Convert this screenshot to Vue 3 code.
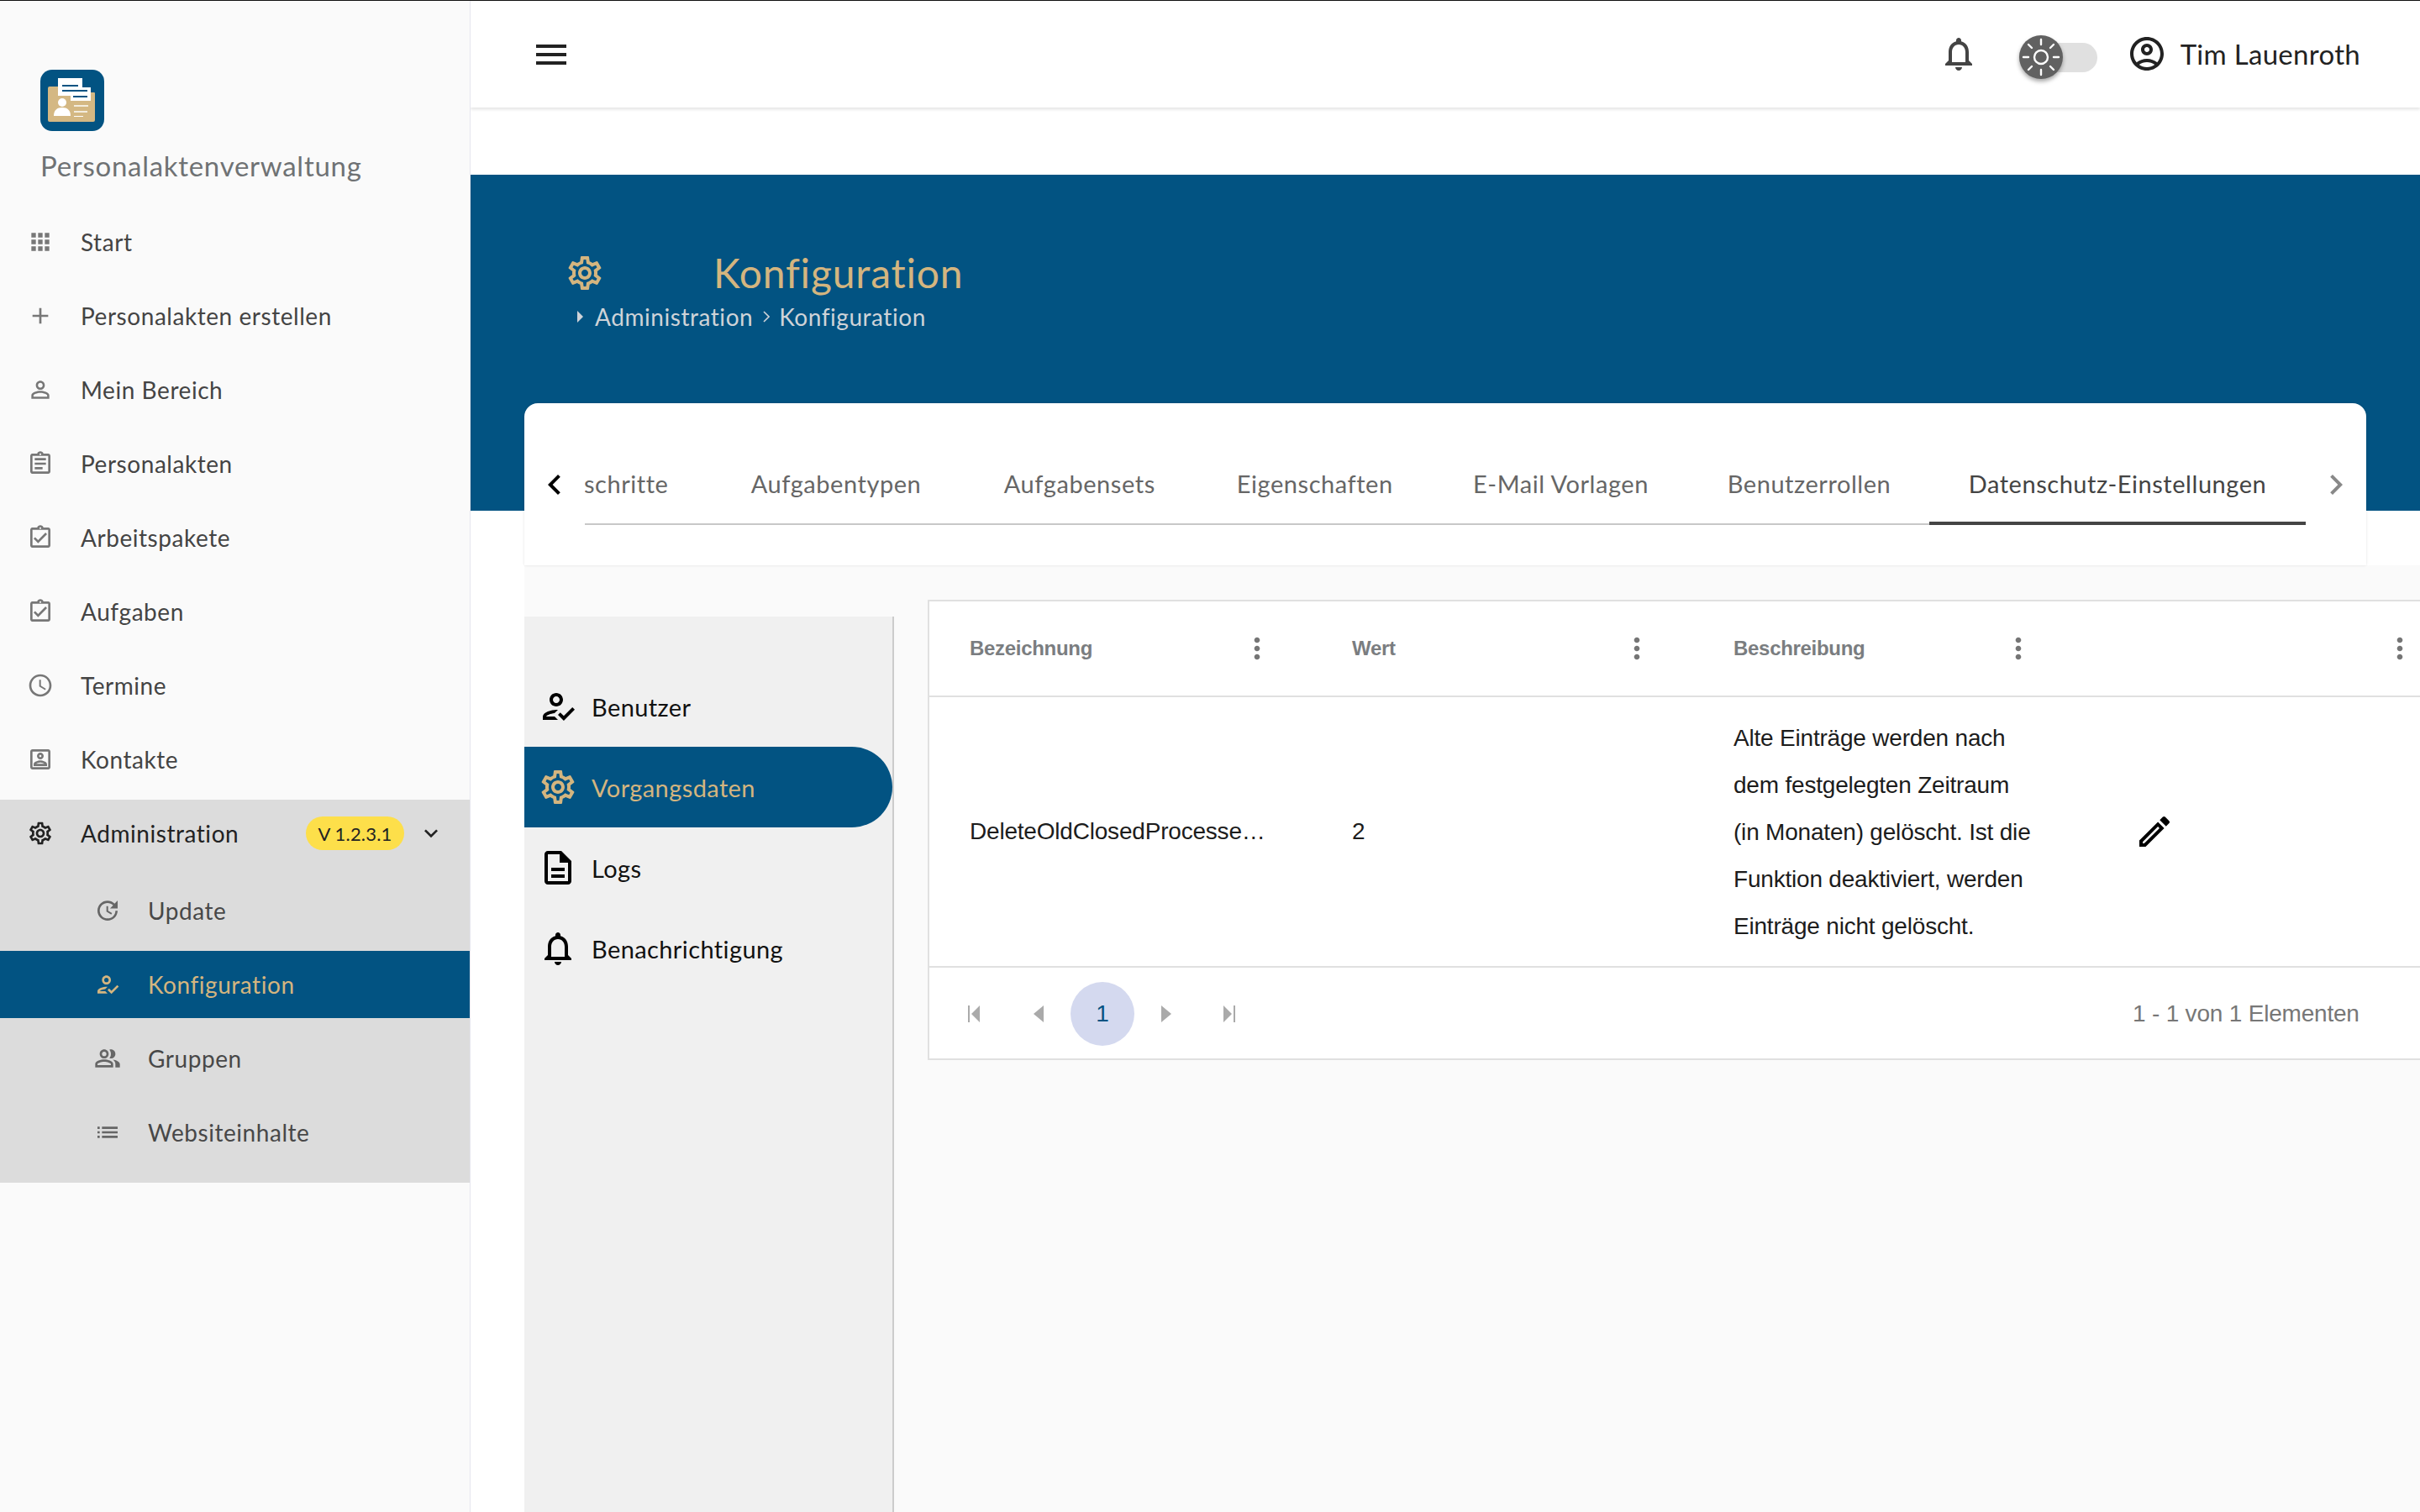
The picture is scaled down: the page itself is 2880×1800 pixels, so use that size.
<script setup>
const P = {
  apps: 'M4 8h4V4H4v4zm6 12h4v-4h-4v4zm-6 0h4v-4H4v4zm0-6h4v-4H4v4zm6 0h4v-4h-4v4zm6-10v4h4V4h-4zm-6 4h4V4h-4v4zm6 6h4v-4h-4v4zm0 6h4v-4h-4v4z',
  add: 'M19 13h-6v6h-2v-6H5v-2h6V5h2v6h6v2z',
  person: 'M12 5.9c1.16 0 2.1.94 2.1 2.1s-.94 2.1-2.1 2.1S9.9 9.16 9.9 8s.94-2.1 2.1-2.1m0 9c2.97 0 6.1 1.46 6.1 2.1v1.1H5.9V17c0-.64 3.13-2.1 6.1-2.1M12 4C9.79 4 8 5.79 8 8s1.79 4 4 4 4-1.79 4-4-1.79-4-4-4zm0 9c-2.67 0-8 1.34-8 4v3h16v-3c0-2.66-5.33-4-8-4z',
  assignment: 'M7 15h7v2H7zm0-4h10v2H7zm0-4h10v2H7zm12-4h-4.18C14.4 1.84 13.3 1 12 1c-1.3 0-2.4.84-2.82 2H5c-.14 0-.27.01-.4.04-.39.08-.74.28-1.01.55-.18.18-.33.4-.43.64-.1.23-.16.49-.16.77v14c0 .27.06.54.16.78s.25.45.43.64c.27.27.62.47 1.01.55.13.02.26.03.4.03h14c1.1 0 2-.9 2-2V5c0-1.1-.9-2-2-2zm-7-.25c.41 0 .75.34.75.75s-.34.75-.75.75-.75-.34-.75-.75.34-.75.75-.75zM19 19H5V5h14v14z',
  turnedIn: 'M18 9l-1.41-1.42L10 14.17l-2.59-2.58L6 13l4 4zm1-6h-4.18C14.4 1.84 13.3 1 12 1c-1.3 0-2.4.84-2.82 2H5c-.14 0-.27.01-.4.04-.39.08-.74.28-1.01.55-.18.18-.33.4-.43.64-.1.23-.16.49-.16.77v14c0 .27.06.54.16.78s.25.45.43.64c.27.27.62.47 1.01.55.13.02.26.03.4.03h14c1.1 0 2-.9 2-2V5c0-1.1-.9-2-2-2zm-7-.25c.41 0 .75.34.75.75s-.34.75-.75.75-.75-.34-.75-.75.34-.75.75-.75zM19 19H5V5h14v14z',
  schedule: 'M11.99 2C6.47 2 2 6.48 2 12s4.47 10 9.99 10C17.52 22 22 17.52 22 12S17.52 2 11.99 2zM12 20c-4.42 0-8-3.58-8-8s3.58-8 8-8 8 3.58 8 8-3.58 8-8 8zm.5-13H11v6l5.25 3.15.75-1.23-4.5-2.67z',
  contact: 'M19 5v14H5V5h14m0-2H5c-1.11 0-2 .9-2 2v14c0 1.1.89 2 2 2h14c1.1 0 2-.9 2-2V5c0-1.1-.9-2-2-2zm-7 9c-1.65 0-3-1.35-3-3s1.35-3 3-3 3 1.35 3 3-1.35 3-3 3zm0-4c-.55 0-1 .45-1 1s.45 1 1 1 1-.45 1-1-.45-1-1-1zm6 10H6v-1.53c0-2.5 3.97-3.58 6-3.58s6 1.08 6 3.58V18zm-9.69-2h7.38c-.69-.56-2.38-1.12-3.69-1.12s-3.01.56-3.69 1.12z',
  settings: 'M19.43 12.98c.04-.32.07-.64.07-.98 0-.34-.03-.66-.07-.98l2.11-1.65c.19-.15.24-.42.12-.64l-2-3.46c-.09-.16-.26-.25-.44-.25-.06 0-.12.01-.17.03l-2.49 1c-.52-.4-1.08-.73-1.69-.98l-.38-2.65C14.46 2.18 14.25 2 14 2h-4c-.25 0-.46.18-.49.42l-.38 2.65c-.61.25-1.17.59-1.69.98l-2.49-1c-.06-.02-.12-.03-.18-.03-.17 0-.34.09-.43.25l-2 3.46c-.13.22-.07.49.12.64l2.11 1.65c-.04.32-.07.65-.07.98 0 .33.03.66.07.98l-2.11 1.65c-.19.15-.24.42-.12.64l2 3.46c.09.16.26.25.44.25.06 0 .12-.01.17-.03l2.49-1c.52.4 1.08.73 1.69.98l.38 2.65c.03.24.24.42.49.42h4c.25 0 .46-.18.49-.42l.38-2.65c.61-.25 1.17-.59 1.69-.98l2.49 1c.06.02.12.03.18.03.17 0 .34-.09.43-.25l2-3.46c.12-.22.07-.49-.12-.64l-2.11-1.65zm-1.98-1.71c.04.31.05.52.05.73 0 .21-.02.43-.05.73l-.14 1.13.89.7 1.08.84-.7 1.21-1.27-.51-1.04-.42-.9.68c-.43.32-.84.56-1.25.73l-1.06.43-.16 1.13-.2 1.35h-1.4l-.19-1.35-.16-1.13-1.06-.43c-.43-.18-.83-.41-1.23-.71l-.91-.7-1.06.43-1.27.51-.7-1.21 1.08-.84.89-.7-.14-1.13c-.03-.31-.05-.54-.05-.74s.02-.43.05-.73l.14-1.13-.89-.7-1.08-.84.7-1.21 1.27.51 1.04.42.9-.68c.43-.32.84-.56 1.25-.73l1.06-.43.16-1.13.2-1.35h1.39l.19 1.35.16 1.13 1.06.43c.43.18.83.41 1.23.71l.91.7 1.06-.43 1.27-.51.7 1.21-1.07.85-.89.7.14 1.13zM12 8c-2.21 0-4 1.79-4 4s1.79 4 4 4 4-1.79 4-4-1.79-4-4-4zm0 6c-1.1 0-2-.9-2-2s.9-2 2-2 2 .9 2 2-.9 2-2 2z',
  expand: 'M16.59 8.59L12 13.17 7.41 8.59 6 10l6 6 6-6z',
  update: 'M21 10.12h-6.78l2.74-2.82c-2.73-2.7-7.15-2.8-9.88-.1-2.73 2.71-2.73 7.08 0 9.79s7.15 2.71 9.88 0C18.32 15.65 19 14.08 19 12.1h2c0 1.98-.88 4.55-2.64 6.29-3.51 3.48-9.21 3.48-12.72 0-3.5-3.47-3.53-9.11-.02-12.58s9.14-3.47 12.65 0L21 3v7.12zM12.5 8v4.25l3.5 2.08-.72 1.21L11 13V8h1.5z',
  reg: 'M11 4C8.79 4 7 5.79 7 8s1.79 4 4 4 4-1.79 4-4-1.79-4-4-4zm0 6c-1.1 0-2-.9-2-2s.9-2 2-2 2 .9 2 2-.9 2-2 2zM5 18c.2-.63 2.57-1.68 4.96-1.94l2.04-2c-.39-.04-.68-.06-1-.06-2.67 0-8 1.34-8 4v2h9l-2-2H5zm15.6-5.5l-5.13 5.17-2.07-2.08L12 17l3.47 3.5L22 13.91z',
  people: 'M16.67 13.13C18.04 14.06 19 15.32 19 17v3h4v-3c0-2.18-3.57-3.47-6.33-3.87zM15 12c2.21 0 4-1.79 4-4s-1.79-4-4-4c-.47 0-.91.1-1.33.24C14.5 5.27 15 6.58 15 8s-.5 2.73-1.33 3.76c.42.14.86.24 1.33.24zM9 12c2.21 0 4-1.79 4-4s-1.79-4-4-4-4 1.79-4 4 1.79 4 4 4zm0-6c1.1 0 2 .9 2 2s-.9 2-2 2-2-.9-2-2 .9-2 2-2zM9 13c-2.67 0-8 1.34-8 4v3h16v-3c0-2.66-5.33-4-8-4zm6 5H3v-.99C3.2 16.29 6.3 15 9 15s5.8 1.29 6 2v1z',
  list: 'M3 13h2v-2H3v2zm0 4h2v-2H3v2zm0-8h2V7H3v2zm4 4h14v-2H7v2zm0 4h14v-2H7v2zM7 7v2h14V7H7z',
  bell: 'M12 22c1.1 0 2-.9 2-2h-4c0 1.1.9 2 2 2zm6-6v-5c0-3.07-1.63-5.64-4.5-6.32V4c0-.83-.67-1.5-1.5-1.5s-1.5.67-1.5 1.5v.68C7.64 5.36 6 7.92 6 11v5l-2 2v1h16v-1l-2-2zm-2 1H8v-6c0-2.48 1.51-4.5 4-4.5s4 2.02 4 4.5v6z',
  doc: 'M8 16h8v2H8zm0-4h8v2H8zm6-10H6c-1.1 0-2 .9-2 2v16c0 1.1.89 2 1.99 2H18c1.1 0 2-.9 2-2V8l-6-6zm4 18H6V4h7v5h5v11z',
  account: 'M12 2C6.48 2 2 6.48 2 12s4.48 10 10 10 10-4.48 10-10S17.52 2 12 2zM7.35 18.5C8.66 17.56 10.26 17 12 17s3.34.56 4.65 1.5c-1.31.94-2.91 1.5-4.65 1.5s-3.34-.56-4.65-1.5zm10.79-1.38C16.45 15.8 14.32 15 12 15s-4.45.8-6.14 2.12C4.7 15.73 4 13.95 4 12c0-4.42 3.58-8 8-8s8 3.58 8 8c0 1.95-.7 3.73-1.86 5.12zM12 6c-1.93 0-3.5 1.57-3.5 3.5S10.07 13 12 13s3.5-1.57 3.5-3.5S13.93 6 12 6zm0 5c-.83 0-1.5-.67-1.5-1.5S11.17 8 12 8s1.5.67 1.5 1.5S12.83 11 12 11z',
  edit: 'M14.06 9.02l.92.92L5.92 19H5v-.92l9.06-9.06M17.66 3c-.25 0-.51.1-.7.29l-1.83 1.83 3.75 3.75 1.83-1.83c.39-.39.39-1.02 0-1.41l-2.34-2.34c-.2-.2-.45-.29-.71-.29zm-3.6 3.19L3 17.25V21h3.75L17.81 9.94l-3.75-3.75z',
  kebab: 'M12 8c1.1 0 2-.9 2-2s-.9-2-2-2-2 .9-2 2 .9 2 2 2zm0 2c-1.1 0-2 .9-2 2s.9 2 2 2 2-.9 2-2-.9-2-2-2zm0 6c-1.1 0-2 .9-2 2s.9 2 2 2 2-.9 2-2-.9-2-2-2z',
  menu: 'M3 18h18v-2H3v2zm0-5h18v-2H3v2zm0-7v2h18V6H3z',
  left: 'M15.41 7.41L14 6l-6 6 6 6 1.41-1.41L10.83 12z',
  right: 'M10 6L8.59 7.41 13.17 12l-4.58 4.59L10 18l6-6z'
}
const mainItems = [
  ['apps', 'Start'], ['add', 'Personalakten erstellen'], ['person', 'Mein Bereich'],
  ['assignment', 'Personalakten'], ['turnedIn', 'Arbeitspakete'], ['turnedIn', 'Aufgaben'],
  ['schedule', 'Termine'], ['contact', 'Kontakte']
]
const subItems = [
  ['update', 'Update', false], ['reg', 'Konfiguration', true], ['people', 'Gruppen', false], ['list', 'Websiteinhalte', false]
]
const tabs = [
  ['Prozessschritte', 300], ['Aufgabentypen', 300], ['Aufgabensets', 279.5], ['Eigenschaften', 280.5],
  ['E-Mail Vorlagen', 305], ['Benutzerrollen', 286], ['Datenschutz-Einstellungen', 448]
]
const navItems = [
  ['reg', 'Benutzer', false], ['settings', 'Vorgangsdaten', true], ['doc', 'Logs', false], ['bell', 'Benachrichtigung', false]
]
const columns = ['Bezeichnung', 'Wert', 'Beschreibung', '']
const description = ['Alte Einträge werden nach', 'dem festgelegten Zeitraum', '(in Monaten) gelöscht. Ist die', 'Funktion deaktiviert, werden', 'Einträge nicht gelöscht.']
</script>

<template>
  <div class="page">
    <aside class="sidebar">
      <div class="brand">
        <svg class="logo" viewBox="0 0 76 73">
          <rect width="76" height="73" rx="14" fill="#025382" />
          <path d="M9 22a2 2 0 0 1 2-2h21l3 7h29a1 1 0 0 1 1 1v32a2 2 0 0 1-2 2H11a2 2 0 0 1-2-2z" fill="#d4b883" />
          <rect x="21" y="10" width="29" height="21" fill="#fff" />
          <rect x="36" y="21" width="24" height="16" fill="#fff" />
          <rect x="26" y="18" width="19" height="2" fill="#025382" />
          <rect x="26" y="24" width="30" height="2" fill="#025382" />
          <rect x="39" y="31" width="17" height="2" fill="#025382" />
          <circle cx="26" cy="39" r="5" fill="#fff" />
          <path d="M16 55c0-7 4-10 10-10s10 3 10 10z" fill="#fff" />
          <rect x="40" y="42" width="17" height="2" fill="#f3ecdd" />
          <rect x="40" y="49" width="16" height="2" fill="#f3ecdd" />
          <rect x="40" y="55" width="11" height="1" fill="#fff" />
        </svg>
        <div class="brand-name">Personalaktenverwaltung</div>
      </div>
      <nav class="side-list">
        <div v-for="item in mainItems" :key="item[1]" class="side-item">
          <svg class="side-icon" viewBox="0 0 24 24"><path :d="P[item[0]]" /></svg>
          <span>{{ item[1] }}</span>
        </div>
      </nav>
      <div class="admin">
        <div class="side-item admin-head">
          <svg class="side-icon dark" viewBox="0 0 24 24"><path :d="P.settings" /></svg>
          <span class="admin-label">Administration</span>
          <span class="badge">V 1.2.3.1</span>
          <svg class="side-icon dark expand" viewBox="0 0 24 24"><path :d="P.expand" /></svg>
        </div>
        <div v-for="item in subItems" :key="item[1]" class="sub-item" :class="{ active: item[2] }">
          <svg class="sub-icon" viewBox="0 0 24 24"><path :d="P[item[0]]" /></svg>
          <span>{{ item[1] }}</span>
        </div>
      </div>
    </aside>

    <main class="main">
      <header class="topbar">
        <svg class="icon48 menu" viewBox="0 0 24 24"><path :d="P.menu" /></svg>
        <div class="top-right">
          <svg class="icon48 bell" viewBox="0 0 24 24"><path :d="P.bell" /></svg>
          <div class="toggle">
            <div class="thumb">
              <svg viewBox="0 0 52 52" width="52" height="52" fill="none" stroke="#fff" stroke-width="2.4" stroke-linecap="round">
                <circle cx="26" cy="26" r="8" />
                <path d="M26 5v6M26 41v6M5 26h6M41 26h6M11 11l4 4M37 37l4 4M41 11l-4 4M15 37l-4 4" />
              </svg>
            </div>
          </div>
          <svg class="icon48 account" viewBox="0 0 24 24"><path :d="P.account" /></svg>
          <span class="user">Tim Lauenroth</span>
        </div>
      </header>

      <section class="hero">
        <div class="hero-title">
          <svg class="icon48 gold" viewBox="0 0 24 24"><path :d="P.settings" /></svg>
          <h1>Konfiguration</h1>
        </div>
        <div class="crumbs">
          <svg class="crumb-tri" viewBox="0 0 7 14"><path d="M0 0l7 7-7 7z" /></svg>
          <span>Administration</span>
          <svg class="crumb-sep" viewBox="0 0 8 14"><path d="M1 1l6 6-6 6" /></svg>
          <span>Konfiguration</span>
        </div>
      </section>

      <section class="card">
        <svg class="icon48 arrow-left" viewBox="0 0 24 24"><path :d="P.left" /></svg>
        <div class="tabs">
          <div
            v-for="tab in tabs"
            :key="tab[0]"
            class="tab"
            :class="{ active: tab[0].startsWith('Datenschutz') }"
            :style="{ width: tab[1] + 'px' }"
          >{{ tab[0] }}</div>
        </div>
        <svg class="icon48 arrow-right" viewBox="0 0 24 24"><path :d="P.right" /></svg>
      </section>

      <section class="content">
        <nav class="config-nav">
          <div v-for="item in navItems" :key="item[1]" class="config-item" :class="{ active: item[2] }">
            <svg class="icon48" viewBox="0 0 24 24"><path :d="P[item[0]]" /></svg>
            <span>{{ item[1] }}</span>
          </div>
        </nav>
        <div class="table">
          <div class="thead">
            <div v-for="(col, i) in columns" :key="i" class="th">
              <span>{{ col }}</span>
              <svg class="kebab" viewBox="0 0 24 24"><path :d="P.kebab" /></svg>
            </div>
          </div>
          <div class="tbody">
            <div class="td"><span class="name">DeleteOldClosedProcesse…</span></div>
            <div class="td">2</div>
            <div class="td desc"><div v-for="line in description" :key="line">{{ line }}</div></div>
            <div class="td action"><svg class="icon48" viewBox="0 0 24 24"><path :d="P.edit" /></svg></div>
          </div>
          <div class="pager">
            <svg class="pg first" viewBox="0 0 14 20"><path d="M0 0h2v20H0zM14 0v20L4 10z" /></svg>
            <svg class="pg prev" viewBox="0 0 12 20"><path d="M12 0v20L0 10z" /></svg>
            <div class="page-num">1</div>
            <svg class="pg next" viewBox="0 0 12 20"><path d="M0 0v20l12-10z" /></svg>
            <svg class="pg last" viewBox="0 0 14 20"><path d="M14 0h-2v20h2zM0 0v20l10-10z" /></svg>
            <div class="pg-info">1 - 1 von 1 Elementen</div>
          </div>
        </div>
      </section>
    </main>
  </div>
</template>

<style>
html, body { margin: 0; padding: 0; background: #fff; }
</style>

<style scoped>
* { box-sizing: border-box; }
.page {
  display: flex; width: 2880px; height: 1800px; overflow: hidden;
  border-top: 1px solid #111; background: #fff;
  font-family: Lato, "Noto Sans", sans-serif; font-size: 28px; letter-spacing: .55px;
}
.sidebar { width: 560px; flex: none; background: #fafafa; border-right: 1px solid #e6e6ee; display: flex; flex-direction: column; }
.brand { padding: 82px 0 0 48px; height: 247px; }
.logo { width: 76px; height: 73px; display: block; }
.brand-name { margin-top: 19px; color: #6f7274; font-size: 33px; line-height: 44px; letter-spacing: .72px; white-space: nowrap; }
.side-list { display: flex; flex-direction: column; gap: 8px; }
.side-item { height: 80px; display: flex; align-items: center; padding-left: 32px; color: #444; }
.side-icon { width: 32px; height: 32px; fill: #777; flex: none; margin-right: 32px; }
.side-icon.dark { fill: #222; }
.admin { margin-top: 8px; background: #dcdcdc; padding-bottom: 20px; display: flex; flex-direction: column; gap: 8px; }
.admin-head { margin-bottom: 4px; color: #222; }
.admin-label { width: 268px; }
.badge { width: 117px; height: 40px; border-radius: 20px; background: #fddf4a; color: #222; font-size: 22px; letter-spacing: .2px; display: flex; align-items: center; justify-content: center; }
.expand { margin: 0 0 0 16px; }
.sub-item { height: 80px; display: flex; align-items: center; padding-left: 112px; color: #484848; }
.sub-icon { width: 32px; height: 32px; fill: #666; flex: none; margin-right: 32px; }
.sub-item.active { background: #025382; color: #d4b57f; }
.sub-item.active .sub-icon { fill: #d4b57f; }
.main { flex: 1; min-width: 0; display: flex; flex-direction: column; overflow: hidden; }
.icon48 { width: 48px; height: 48px; flex: none; }
.topbar { height: 127px; flex: none; display: flex; align-items: center; justify-content: space-between; padding: 0 71px 0 72px; box-shadow: 0 2px 4px rgba(0, 0, 0, .12); position: relative; }
.menu { fill: #222; }
.top-right { display: flex; align-items: center; padding-bottom: 2px; }
.bell { fill: #444; }
.toggle { position: relative; width: 93px; height: 35px; border-radius: 18px; background: #e0e0e0; margin: 9px 0 0 48px; }
.thumb { position: absolute; left: 0; top: -9px; width: 52px; height: 52px; border-radius: 50%; background: #616161; box-shadow: 0 3px 5px rgba(0, 0, 0, .35); }
.thumb svg { display: block; }
.account { fill: #222; margin-left: 35px; }
.user { margin-left: 16px; font-size: 33px; color: #222; letter-spacing: .3px; }
.hero { margin-top: 80px; height: 400px; flex: none; background: #025382; padding: 87px 0 0 112px; }
.hero-title { display: flex; align-items: center; height: 60px; }
.gold { fill: #d4b57f; }
.hero h1 { margin: 0 0 0 129px; font-size: 48px; font-weight: 400; color: #d4b57f; letter-spacing: .8px; line-height: 60px; }
.crumbs { display: flex; align-items: center; margin: 2px 0 0 15px; color: #cfd3d8; height: 40px; }
.crumb-tri { width: 7px; height: 14px; fill: #cfd3d8; margin-right: 14px; }
.crumb-sep { width: 8px; height: 14px; fill: none; stroke: #cfd3d8; stroke-width: 1.6; margin: 0 11px 0 12px; }
.card { margin: -128px 64px 0; height: 193px; flex: none; background: #fff; border-radius: 16px 16px 0 0; box-shadow: 0 0 3px rgba(0, 0, 0, .12); display: flex; align-items: flex-start; padding-top: 73px; position: relative; }
.arrow-left { fill: #000; margin: 0 12px; }
.arrow-right { fill: #888; margin-left: 12px; }
.tabs { width: 2048px; height: 72px; display: flex; justify-content: flex-end; overflow: hidden; box-shadow: inset 0 -2px 0 #c8c8c8; }
.tab { flex: none; height: 72px; line-height: 46px; text-align: center; color: #666; white-space: nowrap; font-size: 29px; }
.tab.active { color: #444; border-bottom: 4px solid #444; }
.content { flex: 1; display: flex; margin-left: 64px; background: #fafafa; min-height: 0; }
.config-nav { width: 440px; flex: none; margin-top: 61px; padding-top: 59px; background: #f0f0f0; border-right: 2px solid #ccc; font-size: 29px; letter-spacing: .4px; }
.config-item { height: 96px; display: flex; align-items: center; padding-left: 16px; color: #111; fill: #000; gap: 16px; }
.config-item.active { background: #025382; color: #d4b57f; fill: #d4b57f; border-radius: 0 48px 48px 0; }
.table { width: 1816px; flex: none; margin: 41px 0 0 40px; height: 548px; background: #fff; border: 2px solid #e0e0e0; border-right: 0; font-family: "Liberation Sans", Arial, sans-serif; letter-spacing: -.2px; }
.thead { display: grid; grid-template-columns: 455px 454px 454px 454px; height: 114px; border-bottom: 2px solid #e0e0e0; }
.th { display: flex; align-items: center; justify-content: space-between; padding: 0 47px 0 48px; color: #7a7d80; font-weight: 700; font-size: 24px; letter-spacing: -.3px; }
.th:first-child { padding-right: 45px; }
.kebab { width: 40px; height: 40px; fill: #757575; }
.tbody { display: grid; grid-template-columns: 455px 454px 454px 454px; height: 322px; border-bottom: 2px solid #e0e0e0; color: #1c1c1c; }
.td { display: flex; align-items: center; padding-left: 48px; }
.name { white-space: nowrap; }
.desc { display: block; line-height: 56px; padding-top: 21px; }
.desc div { white-space: nowrap; }
.action { padding-left: 71px; }
.pager { height: 110px; display: flex; align-items: center; padding: 0 0 0 46px; }
.pg { height: 20px; fill: #aaa; flex: none; }
.first, .last { width: 14px; }
.prev, .next { width: 12px; }
.prev { margin-left: 64px; }
.page-num { width: 76px; height: 76px; margin: 0 32px; border-radius: 50%; background: #d4d9ef; color: #025382; display: flex; align-items: center; justify-content: center; }
.last { margin-left: 62px; }
.pg-info { margin-left: 1068px; color: #777; letter-spacing: -.2px; white-space: nowrap; }
</style>
